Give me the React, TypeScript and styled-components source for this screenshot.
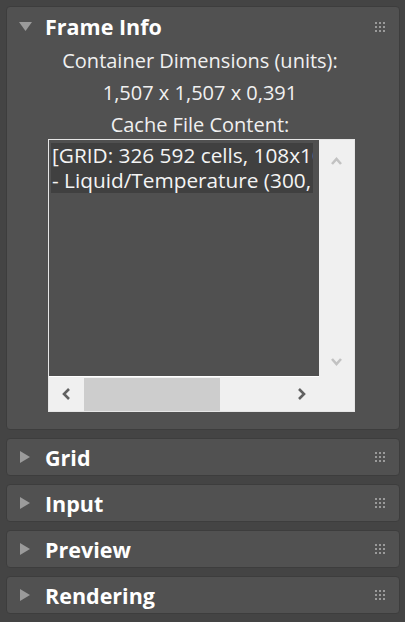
import styled, { createGlobalStyle } from "styled-components";

const GlobalStyle = createGlobalStyle`
  html, body {
    margin: 0;
    padding: 0;
    background: #444444;
  }
  body {
    font-family: "Open Sans", "Noto Sans", sans-serif;
    width: 405px;
    height: 622px;
    overflow: hidden;
  }
`;

const Stack = styled.div`
  display: flex;
  flex-direction: column;
  gap: 8px;
  padding: 6px 5px 0 6px;
`;

const Rollout = styled.section`
  background: #515151;
  border: 1px solid #3d3d3d;
  border-radius: 4px;
`;

const Header = styled.div<{ $open?: boolean }>`
  height: ${(p) => (p.$open ? 38 : 36)}px;
  display: flex;
  align-items: center;
  padding: 0 14px 0 12px;
  ${(p) => (p.$open ? "padding-top: 1px; box-sizing: border-box;" : "")}
`;

const Arrow = styled.span`
  width: 13px;
  display: flex;
  justify-content: center;
  margin-right: 13px;
`;

const Title = styled.h2`
  flex: 1;
  margin: 0;
  font-size: 21.5px;
  font-weight: 700;
  color: #ffffff;
`;

const Grip = styled.div`
  display: grid;
  grid-template-columns: repeat(3, 2px);
  grid-auto-rows: 2px;
  gap: 2px;
  span {
    background: #9a9a9a;
  }
`;

const Body = styled.div`
  padding: 0 0 17px 41px;
`;

const Label = styled.div`
  height: 32px;
  line-height: 32px;
  text-align: center;
  margin-left: -47px;
  font-size: 20px;
  color: #f0f0f0;
`;

const ListBox = styled.div`
  margin-top: -2px;
  width: 307px;
  box-sizing: border-box;
  border: 1px solid #e6e6e6;
  display: grid;
  grid-template-columns: 270px 35px;
  grid-template-rows: 237px 34px;
  background: #f0f0f0;
`;

const Content = styled.div`
  background: #505050;
  padding: 3px 6px 0 2px;
  overflow: hidden;
`;

const Line = styled.div`
  background: #404040;
  height: 25px;
  line-height: 25px;
  padding-left: 1px;
  white-space: nowrap;
  overflow: hidden;
  font-size: 20.8px;
  color: #f4f4f4;
`;

const VScroll = styled.div`
  display: flex;
  flex-direction: column;
  justify-content: space-between;
  align-items: center;
  padding: 17px 0 11px;
`;

const HScroll = styled.div`
  display: grid;
  grid-template-columns: 35px 1fr 35px;
  border-top: 1px solid #ffffff;
  margin-top: -1px;
`;

const ScrollButton = styled.div`
  display: flex;
  align-items: center;
  justify-content: center;
`;

const Track = styled.div`
  display: flex;
`;

const Thumb = styled.div`
  width: 136px;
  background: #cdcdcd;
  margin: 1px 0 0;
`;

const Corner = styled.div`
  background: #f0f0f0;
`;

function DownTri() {
  return (
    <svg width="13" height="10" viewBox="0 0 13 10">
      <polygon points="0,0 13,0 6.5,9" fill="#9b9b9b" />
    </svg>
  );
}

function RightTri() {
  return (
    <svg width="11" height="12" viewBox="0 0 11 12">
      <polygon points="0,0 10,6 0,12" fill="#9b9b9b" />
    </svg>
  );
}

function Chevron({ dir, color }: { dir: "up" | "down" | "left" | "right"; color: string }) {
  const d = {
    up: "M1 7 L5.5 2 L10 7",
    down: "M1 2 L5.5 7 L10 2",
    left: "M7 1 L2 6 L7 11",
    right: "M2 1 L7 6 L2 11",
  }[dir];
  const vertical = dir === "up" || dir === "down";
  return (
    <svg width={vertical ? 11 : 9} height={vertical ? 9 : 12} viewBox={vertical ? "0 0 11 9" : "0 0 9 12"}>
      <path d={d} fill="none" stroke={color} strokeWidth="2.6" />
    </svg>
  );
}

function GripDots() {
  return (
    <Grip>
      {Array.from({ length: 9 }).map((_, i) => (
        <span key={i} />
      ))}
    </Grip>
  );
}

const collapsed = ["Grid", "Input", "Preview", "Rendering"];

export default function App() {
  return (
    <>
      <GlobalStyle />
      <Stack>
        <Rollout>
          <Header $open>
            <Arrow>
              <DownTri />
            </Arrow>
            <Title>Frame Info</Title>
            <GripDots />
          </Header>
          <Body>
            <Label>Container Dimensions (units):</Label>
            <Label>1,507 x 1,507 x 0,391</Label>
            <Label>Cache File Content:</Label>
            <ListBox>
              <Content>
                <Line>[GRID: 326 592 cells, 108x108x28]</Line>
                <Line>- Liquid/Temperature (300, 300)</Line>
              </Content>
              <VScroll>
                <Chevron dir="up" color="#c2c2c2" />
                <Chevron dir="down" color="#c2c2c2" />
              </VScroll>
              <HScroll>
                <ScrollButton>
                  <Chevron dir="left" color="#606060" />
                </ScrollButton>
                <Track>
                  <Thumb />
                </Track>
                <ScrollButton>
                  <Chevron dir="right" color="#606060" />
                </ScrollButton>
              </HScroll>
              <Corner />
            </ListBox>
          </Body>
        </Rollout>
        {collapsed.map((name) => (
          <Rollout key={name}>
            <Header>
              <Arrow>
                <RightTri />
              </Arrow>
              <Title>{name}</Title>
              <GripDots />
            </Header>
          </Rollout>
        ))}
      </Stack>
    </>
  );
}
